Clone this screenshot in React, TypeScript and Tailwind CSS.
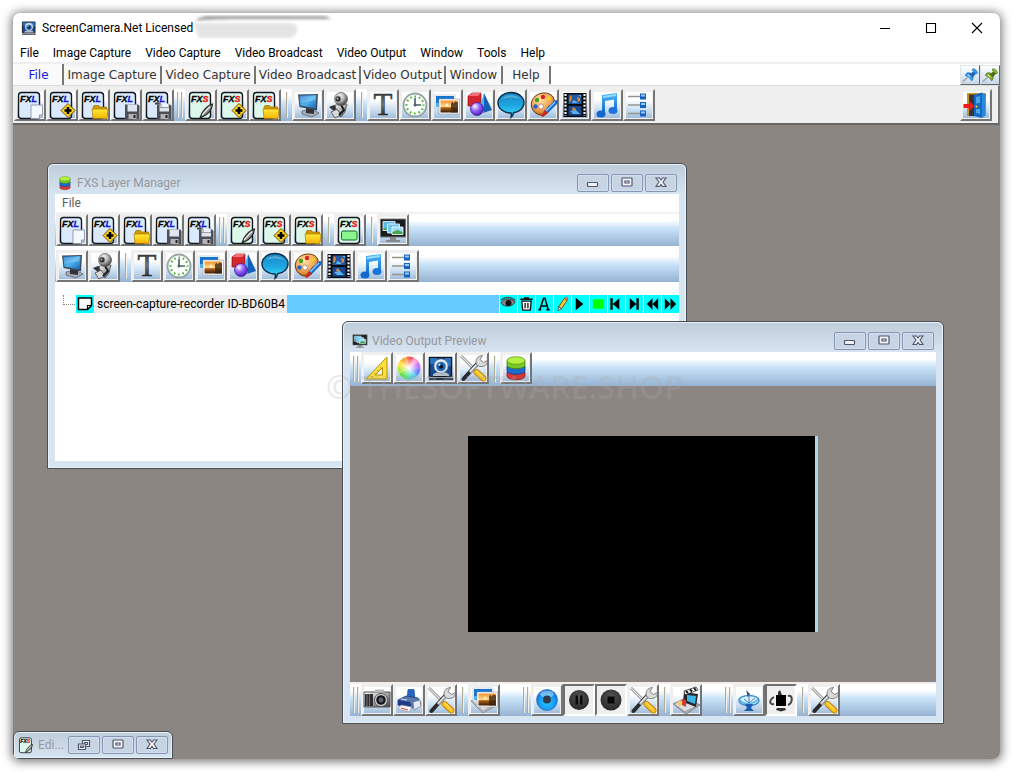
import React from "react";

/* ---------- shared paint definitions ---------- */
function Defs() {
  return (
    <svg className="absolute h-0 w-0" aria-hidden="true">
      <defs>
        <linearGradient id="blue" x1="0" y1="0" x2="1" y2="1">
          <stop offset="0" stopColor="#1d6fc0" /><stop offset=".5" stopColor="#4db4f0" /><stop offset="1" stopColor="#1560b0" />
        </linearGradient>
        <linearGradient id="steel" x1="0" y1="0" x2="1" y2="1">
          <stop offset="0" stopColor="#ffffff" /><stop offset=".5" stopColor="#a9a9a9" /><stop offset="1" stopColor="#3c3c3c" />
        </linearGradient>
        <linearGradient id="sunset" x1="0" y1="0" x2="0" y2="1">
          <stop offset="0" stopColor="#f09030" /><stop offset=".5" stopColor="#ffd890" /><stop offset=".6" stopColor="#b06018" /><stop offset="1" stopColor="#3a1c08" />
        </linearGradient>
        <linearGradient id="bubble" x1="0" y1="0" x2="0" y2="1">
          <stop offset="0" stopColor="#1a86c0" /><stop offset=".5" stopColor="#1ea4e0" /><stop offset="1" stopColor="#35e4ff" />
        </linearGradient>
        <linearGradient id="letter" x1="0" y1="0" x2="0" y2="1">
          <stop offset="0" stopColor="#222" /><stop offset=".5" stopColor="#777" /><stop offset="1" stopColor="#000" />
        </linearGradient>
        <linearGradient id="folder" x1="0" y1="0" x2="0" y2="1">
          <stop offset="0" stopColor="#ffe93a" /><stop offset="1" stopColor="#f5b400" />
        </linearGradient>
        <linearGradient id="note" x1="0" y1="0" x2="0" y2="1">
          <stop offset="0" stopColor="#4cb8ff" /><stop offset="1" stopColor="#0b62c4" />
        </linearGradient>
        <radialGradient id="ball" cx=".38" cy=".3" r=".7">
          <stop offset="0" stopColor="#fff" /><stop offset=".5" stopColor="#b8b8b8" /><stop offset="1" stopColor="#444" />
        </radialGradient>
        <radialGradient id="purple" cx=".35" cy=".3" r=".8">
          <stop offset="0" stopColor="#fff" /><stop offset=".4" stopColor="#9a6aff" /><stop offset="1" stopColor="#3a0fa8" />
        </radialGradient>
        <radialGradient id="record" cx=".5" cy=".6" r=".6">
          <stop offset="0" stopColor="#22c8ff" /><stop offset=".6" stopColor="#1a9cf5" /><stop offset="1" stopColor="#0a62d0" />
        </radialGradient>
        <radialGradient id="tan" cx=".4" cy=".3" r=".8">
          <stop offset="0" stopColor="#ffe2a8" /><stop offset=".6" stopColor="#eda050" /><stop offset="1" stopColor="#9a4c10" />
        </radialGradient>
        <radialGradient id="darkball" cx=".5" cy=".35" r=".7">
          <stop offset="0" stopColor="#555" /><stop offset="1" stopColor="#242424" />
        </radialGradient>
        <radialGradient id="wheelCenter">
          <stop offset="0" stopColor="#fff" /><stop offset="1" stopColor="#fff" stopOpacity="0" />
        </radialGradient>
      </defs>
    </svg>
  );
}

type IconName =
  | "fxlNew" | "fxlAdd" | "fxlOpen" | "fxlSave" | "fxlSaveAs"
  | "fxsEdit" | "fxsAdd" | "fxsOpen" | "fxsView"
  | "monitor" | "webcam" | "text" | "clock" | "pictures" | "shapes" | "bubble" | "palette"
  | "film" | "music" | "sliders" | "door" | "screens" | "ruler" | "wheel" | "eye" | "tools"
  | "stack" | "camera" | "printer" | "photoTray" | "record" | "pause" | "stop" | "clapTray"
  | "dish" | "dishOff" | "pinBlue" | "pinGreen";

function Doc({ kind, children }: { kind: "L" | "S"; children?: React.ReactNode }) {
  return (
    <>
      <rect x="2.5" y="1.5" width="21" height="26" rx="3" fill={kind === "L" ? "#dbe9fc" : "#dcf8ea"} stroke="#101820" strokeWidth="1.4" />
      <text x="4" y="11" fontSize="9" fontWeight="bold" fontStyle="italic" className="font-['Liberation_Sans',sans-serif]" fill="#000" stroke="#000" strokeWidth=".3">
        FX<tspan fill={kind === "L" ? "#1414e8" : "#f00f0f"} stroke={kind === "L" ? "#1414e8" : "#f00f0f"}>{kind}</tspan>
      </text>
      {children}
    </>
  );
}

const Plus = () => (
  <>
    <path d="M20 12.5l7 7-7 7-7-7z" fill="#ffd21e" stroke="#6a4c00" strokeWidth="1" />
    <path d="M20 16v7M16.500 19.500h7" stroke="#000" strokeWidth="2.600" />
  </>
);
const Folder = () => (
  <>
    <path d="M13 16.500l1-2h4.500l1 1.500h7v3H13z" fill="#d69a00" stroke="#8a6200" strokeWidth=".6" />
    <path d="M12 18h16l-1 9.500H13z" fill="url(#folder)" stroke="#a87800" strokeWidth=".7" />
  </>
);
const Disk = () => (
  <>
    <path d="M13 13.500h13l1.500 1.500v13H13z" fill="#4c4f55" />
    <path d="M15.500 13.500h9.500v7h-9.500z" fill="#dfe6f2" />
    <path d="M16.500 23h8v5h-8z" fill="#b4b4b4" /><path d="M21.500 24h2v3h-2z" fill="#222" />
  </>
);

const Tools = () => (
  <>
    <path d="M2 2l11 11" stroke="#7c7c7c" strokeWidth="2.600" /><path d="M2 2l11 11" stroke="#f0f0f0" strokeWidth="1.100" />
    <path d="M13 13.500l3 3" stroke="#333" strokeWidth="2" />
    <path d="M17.500 18l7 6.500" stroke="#b87a00" strokeWidth="5.800" strokeLinecap="round" />
    <path d="M17.500 18l7 6.500" stroke="#ffc21c" strokeWidth="4.400" strokeLinecap="round" />
    <path d="M17.500 17l6.500 6" stroke="#fff0a0" strokeWidth="1" />
    <path d="M4.500 25L18 10" stroke="#2a2a2a" strokeWidth="4" strokeLinecap="round" />
    <path d="M11 18.500L20 9" stroke="#9a9a9a" strokeWidth="3.400" /><path d="M11 17.500l8-8.500" stroke="#f4f4f4" strokeWidth="1.200" />
    <path d="M17.500 10.500c-1.500-5 1-8.500 6-9l-2.500 4 3.500 3 4-2c.5 4-3 6.500-8 6z" fill="#dadada" stroke="#666" strokeWidth=".8" />
  </>
);

const Photo = ({ dx = 0, dy = 0 }: { dx?: number; dy?: number }) => (
  <g transform={`translate(${dx} ${dy})`}>
    <path d="M2 4h20v13H2z" fill="#fff" stroke="#9ac" strokeWidth=".5" /><path d="M3 5h18v11H3z" fill="#1674d0" /><path d="M3 12h6v4H3z" fill="#4bb4f0" />
    <path d="M6 8h20.500v15H6z" fill="#fff" stroke="#999" strokeWidth=".6" /><path d="M7.500 9.500h17.500v12H7.500z" fill="url(#sunset)" />
    <path d="M18 21.500v-9l1.500-2 1 2 2-2 2.500 1v10z" fill="#3a2412" opacity=".8" /><circle cx="14" cy="14" r="1.500" fill="#fff3b0" />
  </g>
);

const Pin = ({ a, b }: { a: string; b: string }) => (
  <>
    <path d="M1 26l9-8" stroke="#a0a8b0" strokeWidth="2.500" /><path d="M2 27h7" stroke="#c8d4e0" strokeWidth="2" />
    <path d="M8 11c4-2 9 0 11 3 1 4 0 8-2 10-2-4-6-8-11-9z" fill={a} stroke={b} strokeWidth="1.500" />
    <path d="M13 13l8-6 4 4-6 7z" fill={b} /><path d="M19 3c4 0 8 4 8 8l-3 1-6-6z" fill={a} stroke={b} strokeWidth="1.200" /><path d="M10 14l4 3" stroke="#fff" strokeWidth="1.500" />
  </>
);

const wheelColors = ["#ff5a5a", "#ff9ad0", "#c070ff", "#6a80ff", "#50c8f0", "#40e0a0", "#60e040", "#b8e838", "#ffe040", "#ffa838"];

function drawing(name: IconName): React.ReactNode {
  switch (name) {
    case "fxlNew":
      return <Doc kind="L"><path d="M15 14h11.500v10l-3 3.500H15z" fill="#f4f8ff" stroke="#8c98a8" strokeWidth=".9" /><path d="M26.500 24h-3v3.500" fill="#c4ccd8" stroke="#778" strokeWidth=".7" /></Doc>;
    case "fxlAdd": return <Doc kind="L"><Plus /></Doc>;
    case "fxlOpen": return <Doc kind="L"><Folder /></Doc>;
    case "fxlSave": return <Doc kind="L"><Disk /></Doc>;
    case "fxlSaveAs":
      return <Doc kind="L"><path d="M11 11.500h6v2h-6z" fill="#444" /><Disk /><path d="M15 12.500l3 2-2 2h9v-4" fill="#f0f4ff" stroke="#666" strokeWidth=".6" /></Doc>;
    case "fxsEdit":
      return <Doc kind="S"><path d="M13 27l2-5c3-5 7-8 10.500-9-.5 5-4 10-9.500 12.500z" fill="#888" stroke="#222" strokeWidth="1.200" /><path d="M15 24l8-8.500" stroke="#eee" strokeWidth="1.200" /></Doc>;
    case "fxsAdd": return <Doc kind="S"><Plus /></Doc>;
    case "fxsOpen": return <Doc kind="S"><Folder /></Doc>;
    case "fxsView": return <Doc kind="S"><rect x="5.500" y="15" width="15.500" height="9" rx="1.500" fill="#8cf48c" stroke="#116030" /></Doc>;
    case "monitor":
      return <><path d="M8 20l9-2 8 4-7 4-10-3z" fill="#a8acb4" stroke="#555c66" strokeWidth=".7" /><path d="M12 17l8 1v5l-8-1z" fill="#30343a" /><path d="M4 3.500L24 3l-1 16.500L5.500 16z" fill="#3c4858" /><path d="M5 4.500L22.500 4l-.8 13.500L6.300 14.500z" fill="url(#blue)" /><path d="M6 5.500L21.500 5l-.3 4L6.500 12z" fill="#fff" opacity=".22" /></>;
    case "webcam":
      return <><path d="M3 16l5-2 6 3-5 4z" fill="#333" /><path d="M9 14l12-1-2 8-4 5-4-3z" fill="url(#steel)" stroke="#444" strokeWidth=".7" /><path d="M5 21l6-3 4 6-6 3z" fill="#d8d8d8" stroke="#444" strokeWidth=".8" /><path d="M15 14l3 5-5 5" stroke="#1c1c1c" strokeWidth="2" fill="none" /><circle cx="15" cy="8" r="6.500" fill="url(#ball)" stroke="#555" strokeWidth=".7" /><circle cx="12" cy="8" r="3.200" fill="#303030" stroke="#ddd" strokeWidth=".7" /><circle cx="11.500" cy="7.500" r="1" fill="#bbb" /></>;
    case "text":
      return <text x="14" y="24" textAnchor="middle" fontSize="31" className="font-['Liberation_Serif',serif]" fill="url(#letter)" stroke="#222" strokeWidth=".5">T</text>;
    case "clock":
      return <><circle cx="14" cy="14" r="11.500" fill="#fff" stroke="#98a4a4" strokeWidth="1.800" /><circle cx="14" cy="14" r="8.500" fill="none" stroke="#3ab828" strokeWidth="2.200" strokeDasharray="1.600 2.850" strokeDashoffset=".8" /><path d="M14 7v7h6" stroke="#4c6464" strokeWidth="1.700" fill="none" /><circle cx="14" cy="14" r="1.500" fill="#4c6464" /></>;
    case "pictures": return <Photo />;
    case "shapes":
      return <><path d="M3 5l4-3h9v9l-3 4H3z" fill="#d4262c" stroke="#7c0c14" strokeWidth=".7" /><path d="M3 5l4-3h9l-3 3z" fill="#f47074" /><path d="M19 2l8 17-9 3z" fill="#1260b8" /><path d="M19 2l-5 16 5 4z" fill="#48b4f4" /><circle cx="12" cy="18" r="6.500" fill="url(#purple)" stroke="#401098" strokeWidth=".7" /></>;
    case "bubble":
      return <><path d="M14 1.500c7.500 0 13 4.500 13 10s-4.500 9.500-10.500 10.300c-.3 2-1.200 4-2.500 4.700.5-1.500.5-3 0-4.500C6.500 22 1 17.500 1 11.800S6.500 1.500 14 1.500z" fill="url(#bubble)" stroke="#0c2a4c" strokeWidth="1.400" /><path d="M5 8c3-5 15-5 18 0-5-2-13-2-18 0z" fill="#fff" opacity=".25" /></>;
    case "palette":
      return <><path d="M3 17C0 9 7 2 15 2c7 0 11 4 10 9-1 4-5 3-6 5s1 5-2 7C12 26 5 23 3 17z" fill="url(#tan)" stroke="#6c3408" strokeWidth="1" /><circle cx="8" cy="9" r="2.200" fill="#48a020" /><circle cx="14" cy="6" r="2.200" fill="#d8241c" /><circle cx="20" cy="7.500" r="2" fill="#f4d020" /><circle cx="6.500" cy="15.500" r="2.200" fill="#2860c8" /><circle cx="12" cy="15.500" r="2.500" fill="#fff" stroke="#844" strokeWidth=".5" /><path d="M27 11L17 21" stroke="#1868c8" strokeWidth="4" strokeLinecap="round" /><path d="M26 11L17 20" stroke="#90d0ff" strokeWidth="1.200" /><path d="M16 19l3 3-5 4-2-1z" fill="#c82818" /></>;
    case "film":
      return <><path d="M2.500 2h23v24h-23z" fill="#0c0c10" /><path d="M4.500 3v22M23.500 3v22" stroke="#f4f4f4" strokeWidth="2.200" strokeDasharray="2 1.600" /><path d="M7.500 3.500h13v9.500h-13z" fill="#2458a0" /><path d="M7.500 15h13v9.500h-13z" fill="#184890" /><path d="M9 4l2 2-1 4-2 1zM16 6l3 1v3l-2 1zM12 16l3 2-1 2-3-1z" fill="#e08840" /><path d="M12 9l3 1 2 2h-6zM9 20l3 3h7l-4-4zM17 4h3v2z" fill="#58b0e8" /></>;
    case "music":
      return <><path d="M9 4l15-2v17.500h-3V8.500L12 10v13H9z" fill="url(#note)" /><ellipse cx="8" cy="23" rx="4.500" ry="3.500" fill="#1468cc" /><ellipse cx="20" cy="19.500" rx="4.500" ry="3.500" fill="#1c74d8" /><path d="M10 5l13-2v2l-13 2z" fill="#9adcff" /></>;
    case "sliders":
      return <><path d="M3 5.500h14M3 14h14M3 22.500h14" stroke="#98948c" strokeWidth="1.400" /><path d="M15 2.500h6v6h-6zM15 11h6v6h-6zM15 19.500h6v6h-6z" fill="#1860c0" /><path d="M16 3.500h4v2h-4zM16 12h4v2h-4zM16 20.500h4v2h-4z" fill="#8cd0ff" /></>;
    case "door":
      return <><path d="M5 2h19v23H5z" fill="#c89420" /><path d="M7 3.500h15V25H7z" fill="#34343c" /><path d="M12 4l8-2.500V27l-8-2z" fill="#1668c0" /><path d="M20 1.500l3.500 2v21L20 27z" fill="#2888dc" /><path d="M14 6l4-1v7l-4 .5zM14 18h4v5l-4-1z" fill="#4ca4ec" /><path d="M1.500 13h6v-3l5 5-5 5v-3h-6z" fill="#ec1c1c" /><circle cx="14.500" cy="15.500" r="1" fill="#ffe020" /></>;
    case "screens":
      return <><path d="M1.500 3h25v18h-25z" fill="#1a1c20" stroke="#777" strokeWidth="1" /><path d="M4 5.500h12v9H4z" fill="#5cb8ec" stroke="#fff" strokeWidth=".8" /><path d="M8.500 8h12v9h-12z" fill="#6cc4e8" stroke="#fff" strokeWidth=".8" /><path d="M13 11h11v7.500H13z" fill="#9adcf8" stroke="#fff" strokeWidth=".8" /><path d="M13.500 16l5-2 5 2v2h-10zM4.500 12h3v2h-3z" fill="#48a448" /><path d="M11 21h6v3h4v2H7v-2h4z" fill="#888" /></>;
    case "ruler":
      return <><path d="M24 3v22H3z" fill="#ffe040" stroke="#b89000" strokeWidth="1" /><path d="M19.500 13.500v7.500h-7.500z" fill="#e8f2fc" stroke="#b89000" /><path d="M8 22l2 2M11 19l1.500 1.500M14 16l1.500 1.500M17 13l1.500 1.500" stroke="#a07800" strokeWidth=".8" /></>;
    case "wheel":
      return <>{wheelColors.map((c, i) => {
        const a = (i / 10) * Math.PI * 2 - 1.8, b = a + 0.7;
        return <path key={c} d={`M14 14L${14 + 11.500 * Math.cos(a)} ${14 + 11.500 * Math.sin(a)}A11.500 11.500 0 0 1 ${14 + 11.500 * Math.cos(b)} ${14 + 11.500 * Math.sin(b)}z`} fill={c} />;
      })}<circle cx="14" cy="14" r="10" fill="url(#wheelCenter)" /></>;
    case "eye":
      return <><path d="M2.500 3.500h22v19h-22z" fill="#164c90" stroke="#141820" strokeWidth="1.600" /><path d="M3 4h7v6H3zM18 4h6v8h-6z" fill="#2c88d8" opacity=".7" /><path d="M6 21c1-4 15-4 16 0v1H6z" fill="#b4bcc8" /><circle cx="14" cy="12" r="7" fill="#e4ecf6" stroke="#7c8a9c" strokeWidth=".7" /><circle cx="14" cy="12.500" r="4.800" fill="#2468b8" /><circle cx="14" cy="12.500" r="2.200" fill="#081830" /><circle cx="12.500" cy="10.800" r="1" fill="#fff" /><path d="M2 24h24v2H2z" fill="#30343c" /></>;
    case "tools": return <Tools />;
    case "stack":
      return <><path d="M5 18v4c0 5 18 5 18 0v-4z" fill="#d43838" stroke="#8c1818" strokeWidth=".8" /><path d="M5 12v4.500c0 5 18 5 18 0V12z" fill="#1c6cd0" stroke="#0c3c88" strokeWidth=".8" /><path d="M5 6.500v4.500c0 5 18 5 18 0V6.500z" fill="#78c828" stroke="#3c8010" strokeWidth=".8" /><ellipse cx="14" cy="6.500" rx="9" ry="3.800" fill="#b4f044" stroke="#5c9c18" strokeWidth=".8" /></>;
    case "camera":
      return <><path d="M1 6h26v15H1z" fill="url(#steel)" stroke="#555" strokeWidth="1" /><path d="M2 8h8v12H2z" fill="#2c2c30" /><path d="M4 8v12M6.500 8v12" stroke="#888" strokeWidth=".8" /><path d="M12 3.500h9v3h-9z" fill="#b8b8bc" /><circle cx="18" cy="14" r="6.500" fill="#d8d8dc" stroke="#555" /><circle cx="18" cy="14" r="4.800" fill="#18181c" /><circle cx="18" cy="14" r="2.400" fill="#5c6470" /></>;
    case "printer":
      return <><path d="M13 3.500h6l1 9-8 1z" fill="#2068c8" stroke="#103c80" strokeWidth=".6" /><path d="M3 14l8-4 12 2 3 6-9 4-14-3z" fill="#5878b0" stroke="#283c68" strokeWidth=".8" /><path d="M3 14l12 2 2 6-14-3z" fill="#1c3c88" /><path d="M18 16l7-2 1 6-7 4z" fill="#e4eaf4" stroke="#667" strokeWidth=".6" /><path d="M6 19l11 2-3 5-11-3z" fill="#f8f8f8" stroke="#889" strokeWidth=".6" /><path d="M6 22l7 2" stroke="#c44" strokeWidth="1" /><path d="M6 13l6 1" stroke="#c8dcff" strokeWidth="1" /></>;
    case "photoTray":
      return <><path d="M1 15l12-4 14 8-14 8z" fill="#b4b8bc" stroke="#808488" strokeWidth=".8" /><path d="M2 14l10-3 12 7-11 6z" fill="#e4e6e8" /><Photo dx={1} dy={-2} /></>;
    case "record":
      return <><circle cx="14" cy="14" r="10.500" fill="url(#record)" stroke="#1c64b0" strokeWidth=".6" /><ellipse cx="14" cy="8" rx="7" ry="3.500" fill="#fff" opacity=".4" /><circle cx="14" cy="13.500" r="4" fill="#303c4c" /></>;
    case "pause":
      return <><circle cx="14" cy="14" r="10" fill="url(#darkball)" /><path d="M10.500 9.500h2.500v9h-2.500zM15 9.500h2.500v9H15z" fill="#080808" /></>;
    case "stop":
      return <><circle cx="14" cy="14" r="10.500" fill="url(#darkball)" /><path d="M10.500 10.500h7v7h-7z" fill="#080808" /></>;
    case "clapTray":
      return <><path d="M1 18l13-6 14 7-14 9z" fill="#a8acb0" stroke="#777" strokeWidth=".8" /><path d="M3 18l11-5 11 6-12 6z" fill="#dcdee0" /><path d="M12 6l14 2-2 13-13-5z" fill="#24282c" /><path d="M15 9l9 1-1 8-8-3z" fill="#3cb4e4" /><path d="M12 5l12-4 2 3-13 5z" fill="#fff" stroke="#111" strokeWidth=".7" /><path d="M14 5l2 2M18 3.500l2 2M22 2l2 2.500" stroke="#111" strokeWidth="2" /><path d="M10 13l4 1v7l-4-2z" fill="#d43c30" /><path d="M5 16l3-2 2 5-3 1z" fill="#f0c860" /></>;
    case "dish":
      return <><ellipse cx="14" cy="14.500" rx="10" ry="5" fill="#d8f0ff" stroke="#3c8ccc" strokeWidth="1.400" /><path d="M5 14c3 5 14 5 18-1" stroke="#58b4ec" strokeWidth="1.500" fill="none" /><path d="M11 4l4 4-2 3z" fill="#284878" /><path d="M14 9v7M9 13l5 4 6-5" stroke="#4884b8" strokeWidth="1" fill="none" /><path d="M10 18h8l-2 4 3 3H9l3-3z" fill="#1c5cb0" /></>;
    case "dishOff":
      return <><path d="M7 11c-5 3-5 8 0 7M21 10c5-2 5 7 0 9" stroke="#444" strokeWidth="2" fill="none" /><path d="M9 9h10v11H9z" fill="#000" /><path d="M11 9V6l2-2 2 5zM10 22h8l1 2-5 1.500L9 24z" fill="#333" /></>;
    case "pinBlue": return <Pin a="#38a0f0" b="#1c68b8" />;
    case "pinGreen": return <Pin a="#98b828" b="#4c6c18" />;
  }
}

function Icon({ name, className }: { name: IconName; className: string }) {
  return <svg viewBox="0 0 28 28" className={`overflow-visible ${className}`} aria-hidden="true">{drawing(name)}</svg>;
}

type Tool = [IconName, string];

function ToolButton({ tool, pressed = false }: { tool: Tool; pressed?: boolean }) {
  const look = pressed
    ? "border-t-[#707070] border-l-[#707070] border-r-white border-b-white bg-[#efefef]"
    : "border-t-[#efefef] border-l-[#efefef] border-r-[#757575] border-b-[#757575] bg-linear-to-b from-white from-30% via-[#d5e6f5] via-60% to-[#9dbad9] shadow-[inset_0_0_0_1px_#efefef]";
  return (
    <button type="button" aria-label={tool[1]} title={tool[1]} aria-pressed={pressed || undefined} className={`flex size-8 shrink-0 items-center justify-center border-2 ${look}`}>
      <Icon name={tool[0]} className="size-7 shrink-0" />
    </button>
  );
}

const Bar = () => <span className="h-[26px] w-[2px] border-l border-[#b3aa94] bg-[#f4efe2]" />;
const Sep = () => <span className="flex w-[11px] shrink-0 items-center justify-center"><Bar /></span>;
const Grip = () => <span className="flex w-[11px] shrink-0 items-center justify-center gap-[2px]"><Bar /><Bar /></span>;

const Group = ({ tools }: { tools: Tool[] }) => <>{tools.map((t) => <ToolButton key={t[0]} tool={t} />)}</>;

const fxl: Tool[] = [["fxlNew", "New layout"], ["fxlAdd", "Add layout"], ["fxlOpen", "Open layout"], ["fxlSave", "Save layout"], ["fxlSaveAs", "Save layout as"]];
const fxs: Tool[] = [["fxsEdit", "Edit effect"], ["fxsAdd", "Add effect"], ["fxsOpen", "Open effect"]];
const sources: Tool[] = [["monitor", "Screen"], ["webcam", "Webcam"]];
const layers: Tool[] = [["text", "Text"], ["clock", "Clock"], ["pictures", "Picture"], ["shapes", "Shapes"], ["bubble", "Speech bubble"], ["palette", "Paint"], ["film", "Video"], ["music", "Audio"], ["sliders", "Settings"]];

const strip = "bg-linear-to-b from-white from-20% via-[#c9e3f8] via-45% to-[#96b3d3]";

function CaptionButtons({ first = "min" }: { first?: "min" | "restore" }) {
  const cls = "flex h-[18px] w-8 items-center justify-center rounded-[2px] border border-[#8796b4] bg-[#c6d4e4] shadow-[inset_0_0_0_1px_#d3dfec]";
  return (
    <div className="flex shrink-0 gap-[2px]">
      <button type="button" aria-label={first === "min" ? "Minimize" : "Restore"} className={cls}>
        <svg viewBox="0 0 14 12" className="h-3 w-3.5" fill="#f2f2f2" stroke="#50566e" strokeWidth="1.200">
          {first === "min" ? <rect x="1.500" y="5.500" width="10" height="4" rx=".8" /> : <><path d="M5.500 1.500h7v6h-7z" /><path d="M7.500 3.500h3v2h-3z" /><path d="M1.500 5h7v5.500h-7z" /><path d="M3.500 7h3v1.500h-3z" /></>}
        </svg>
      </button>
      <button type="button" aria-label="Maximize" className={cls}>
        <svg viewBox="0 0 14 12" className="h-3 w-3.5" fill="#f2f2f2" stroke="#50566e" strokeWidth="1.200"><rect x="2" y="1" width="10" height="8" rx=".8" /><path d="M5 4h4v2H5z" /></svg>
      </button>
      <button type="button" aria-label="Close" className={cls}>
        <svg viewBox="0 0 14 12" className="h-3 w-3.5" fill="#f2f2f2" stroke="#50566e" strokeWidth="1.100"><path d="M2 1h3.500L7 3l1.500-2H12L9 5l3 4.500H8.500L7 7.500l-1.500 2H2L5 5z" /></svg>
      </button>
    </div>
  );
}

function Child({ title, icon, place, children }: { title: string; icon: IconName; place: string; children: React.ReactNode }) {
  return (
    <section aria-label={title} className={`absolute flex flex-col rounded-t-[6px] border border-[#4a4d52] bg-[#d7e4f2] px-[7px] pb-[7px] shadow-[inset_0_0_0_1px_#e8f1fa] ${place}`}>
      <header className="-mx-[6px] mt-px flex h-[29px] shrink-0 items-center rounded-t-[5px] bg-linear-to-b from-[#bfcddb] to-[#d7e4f2] pt-[6px] pr-2 pl-2">
        <Icon name={icon} className="mr-1 size-4" />
        <h2 className="flex-1 text-[#98989c]">{title}</h2>
        <CaptionButtons />
      </header>
      <div className="flex min-h-0 flex-1 flex-col">{children}</div>
    </section>
  );
}

const rowIcons: [string, React.ReactNode][] = [
  ["Visible", <><path d="M1 8c3-5 10-6 15-1-3 5-11 6-15 1z" fill="#888" stroke="#333" /><circle cx="9" cy="8" r="3.200" fill="#111" /><path d="M1 5c4-4 10-4 15 0" stroke="#444" strokeWidth="1.500" fill="none" /></>],
  ["Delete", <path d="M4 6h10l-1 9.500H5zM2.500 4h13M7 4V2.500h4V4M7.500 8v5.500M10.500 8v5.500" stroke="#111" strokeWidth="1.400" fill="#fff" />],
  ["Title", <path d="M4 15L8 3h1.500L13 15M5.500 11h6.500M2.500 15h3M11 15h3.500" stroke="#000" strokeWidth="1.600" fill="none" />],
  ["Edit", <><path d="M5 12l6-9 3 2-6 9z" fill="#ffc830" stroke="#6c4a10" /><path d="M5 12l3 2-4 2z" fill="#fff" stroke="#222" strokeWidth=".7" /><path d="M11 3l3 2 .5-2.500-1.500-1z" fill="#f09090" stroke="#733" strokeWidth=".6" /></>],
  ["Play", <path d="M4 2.500l8 6.500-8 6.500z" fill="#000" />],
  ["Status", <path d="M3 4h11v10H3z" fill="#0f0" />],
  ["First", <path d="M2.500 3H5v12H2.500zM12 3v12L5 9z" fill="#000" />],
  ["Last", <path d="M11 3h2.500v12H11zM4 3v12l7-6z" fill="#000" />],
  ["Rewind", <path d="M9 3v12L3 9zM15 3v12L9 9z" fill="#000" />],
  ["Forward", <path d="M3 3v12l6-6zM9 3v12l6-6z" fill="#000" />],
];

const menu = ["File", "Image Capture", "Video Capture", "Video Broadcast", "Video Output", "Window", "Tools", "Help"];
const tabs: [string, string][] = [["Image Capture", "w-[98px]"], ["Video Capture", "w-[94px]"], ["Video Broadcast", "w-[105px]"], ["Video Output", "w-[85px]"], ["Window", "w-[57px]"], ["Help", "w-12"]];

export default function App() {
  return (
    <div className="flex min-h-screen flex-col bg-white px-[13px] py-[13px] font-[Roboto,'Open_Sans',sans-serif] text-[12px] leading-4 text-black">
      <Defs />
      <main className="relative flex flex-1 flex-col overflow-hidden rounded-[7px] bg-white shadow-[0_1px_10px_2px_rgba(0,0,0,0.5)]">
        <header className="flex h-[30px] shrink-0 items-center pl-2">
          <Icon name="eye" className="mr-[5px] size-4" />
          <h1>ScreenCamera.Net Licensed</h1>
          <svg viewBox="0 0 140 26" className="h-[26px] w-[140px]" aria-hidden="true">
            <filter id="smudge"><feGaussianBlur stdDeviation="1.500" /></filter>
            <path d="M3 6C6 2 9 2 14 1h116c4 0 6 2 8 3H60C40 4 14 4 3 6z" fill="#999" filter="url(#smudge)" />
            <path d="M0 8h100q10 8-2 15H6z" fill="#e4e4e4" filter="url(#smudge)" />
            <path d="M14 16h22M42 16h26M74 16h28" stroke="#b4b4b4" strokeWidth="7" filter="url(#smudge)" />
          </svg>
          <div className="ml-auto flex">
            {[
              ["Minimize", "M0 5.500h10"],
              ["Maximize", "M.5.5h9v9h-9z"],
              ["Close", "M0 0l10 10M10 0L0 10"],
            ].map(([label, d]) => (
              <button key={label} type="button" aria-label={label} className="flex h-[30px] w-[46px] items-center justify-center">
                <svg viewBox="-1 -1 12 12" className="size-3" fill="none" stroke="#000" strokeWidth="1.100"><path d={d} /></svg>
              </button>
            ))}
          </div>
        </header>

        <nav aria-label="Menu" className="flex h-[19px] shrink-0 items-center gap-[14px] pt-px pl-[7px]">
          {menu.map((m) => <a key={m} href="#" className="whitespace-nowrap">{m}</a>)}
        </nav>

        <div className="flex h-[23px] shrink-0 items-end border-t-2 border-[#efefef] pl-[2px]">
          <div role="tablist" className="flex items-end bg-[#f3f3f3] font-['DejaVu_Sans',sans-serif] text-[#333]">
            <button role="tab" aria-selected="true" type="button" className="h-[21px] w-[49px] border-r-2 border-[#777] bg-[#fafafa] text-[#1616e8]">File</button>
            {tabs.map(([label, w]) => (
              <button key={label} role="tab" aria-selected="false" type="button" className={`mb-px h-[18px] whitespace-nowrap border-r-2 border-[#777] bg-[#f8f8f8] ${w}`}>{label}</button>
            ))}
          </div>
          <div className="ml-auto flex">
            {([["pinBlue", "Pin"], ["pinGreen", "Unpin"]] as Tool[]).map(([n, l]) => (
              <button key={n} type="button" aria-label={l} className="flex size-5 items-center justify-center border border-[#e4e4e4] border-r-[#666] border-b-[#666] bg-linear-to-b from-white to-[#c4d8ec]">
                <Icon name={n} className="size-4" />
              </button>
            ))}
          </div>
        </div>

        <div className="flex h-10 shrink-0 items-center border-t-1 border-r-2 border-b-2 border-t-[#ddd] border-r-[#777] border-b-[#666] bg-[#efefef] pr-[6px] pl-px">
          <div role="toolbar" aria-label="Main" className={`flex ${strip}`}>
            <Group tools={fxl} /><Grip /><Group tools={fxs} /><Sep /><Group tools={sources} /><Sep /><Group tools={layers} />
          </div>
          <div className="ml-auto"><ToolButton tool={["door", "Exit"]} /></div>
        </div>

        <div className="relative min-h-[634px] flex-1 bg-[#8b8682]">
          <Child title="FXS Layer Manager" icon="stack" place="top-[38px] left-[34px] h-[306px] w-[640px]">
            <div className="flex min-h-0 flex-1 flex-col bg-white">
              <nav aria-label="Layer menu" className="h-5 border-b-2 border-[#f2f2f2] pt-px pl-[7px] text-[#5c5c5c]"><a href="#">File</a></nav>
              <div role="toolbar" aria-label="Layouts" className={`flex shrink-0 pl-px ${strip}`}>
                <Group tools={fxl} /><Grip /><Group tools={fxs} /><Sep /><ToolButton tool={["fxsView", "View effect"]} /><Sep /><ToolButton tool={["screens", "Output"]} />
              </div>
              <div role="toolbar" aria-label="Layers" className={`mt-1 flex shrink-0 pl-px ${strip}`}>
                <Group tools={sources} /><Sep /><Group tools={layers} />
              </div>
              <div className="mt-[13px] flex h-[18px] shrink-0">
                <span className="mr-px ml-2 h-[10px] w-3 border-b border-l border-dotted border-[#888]" />
                <div className="flex flex-1 bg-[#66ccff]">
                  <span className="flex w-[18px] items-center justify-center bg-[#00ffff]">
                    <svg viewBox="0 0 16 16" className="size-4" aria-hidden="true"><path d="M1.500 2h13v7.500l-4 4h-9z" fill="#fff" stroke="#000" strokeWidth="1.500" /><path d="M14.500 9.500h-4v4" fill="none" stroke="#000" strokeWidth="1.200" /></svg>
                  </span>
                  <span className="border-l border-white bg-[#ececec] px-[2px] leading-[18px] whitespace-nowrap">screen-capture-recorder ID-BD60B4</span>
                  <div className="ml-auto flex">
                    {rowIcons.map(([label, art]) => (
                      <button key={label} type="button" aria-label={label} className="flex w-[18px] items-center justify-center border-l border-white bg-[#00ffff]">
                        <svg viewBox="0 0 18 18" className="h-[18px] w-[17px]" aria-hidden="true">{art}</svg>
                      </button>
                    ))}
                  </div>
                </div>
              </div>
            </div>
          </Child>

          <Child title="Video Output Preview" icon="screens" place="top-[196px] left-[329px] h-[403px] w-[602px]">
            <div role="toolbar" aria-label="Preview" className={`flex h-[34px] shrink-0 ${strip}`}>
              <Grip />
              <Group tools={[["ruler", "Size"], ["wheel", "Colours"], ["eye", "Camera"], ["tools", "Options"]]} /><Sep /><ToolButton tool={["stack", "Layers"]} />
            </div>
            <div className="flex flex-1 items-center justify-center bg-[#8b8682]">
              <div className="h-[196px] w-[350px] border-r-3 border-[#add8e6] bg-black" />
            </div>
            <div role="toolbar" aria-label="Capture" className={`flex shrink-0 border-t-2 border-[#efefef] ${strip}`}>
              <Grip />
              <Group tools={[["camera", "Snapshot"], ["printer", "Print"], ["tools", "Image options"]]} /><Sep /><ToolButton tool={["photoTray", "Images"]} />
              <span className="w-5" /><Grip />
              <ToolButton tool={["record", "Record"]} /><ToolButton tool={["pause", "Pause"]} pressed /><ToolButton tool={["stop", "Stop"]} pressed /><ToolButton tool={["tools", "Video options"]} />
              <Sep /><ToolButton tool={["clapTray", "Videos"]} />
              <span className="w-5" /><Grip />
              <ToolButton tool={["dish", "Broadcast"]} /><ToolButton tool={["dishOff", "Stop broadcast"]} pressed /><Sep /><ToolButton tool={["tools", "Broadcast options"]} />
            </div>
          </Child>

          <section aria-label="Editor" className="absolute bottom-0 left-0 flex h-7 w-40 items-center rounded-t-[6px] border border-[#4a4d52] bg-linear-to-b from-[#bfcddb] to-[#d7e4f2] pr-1 pl-1 shadow-[inset_0_0_0_1px_#e8f1fa]">
            <Icon name="fxsEdit" className="size-4" />
            <span className="flex-1 pl-1 text-[#98989c]">Edi...</span>
            <CaptionButtons first="restore" />
          </section>

          <p className="pointer-events-none absolute top-[242px] left-[313px] font-['Open_Sans',sans-serif] text-[32px] leading-10 font-semibold whitespace-nowrap text-[#aaaaaa]/25">© THESOFTWARE.SHOP</p>
        </div>
      </main>
    </div>
  );
}
